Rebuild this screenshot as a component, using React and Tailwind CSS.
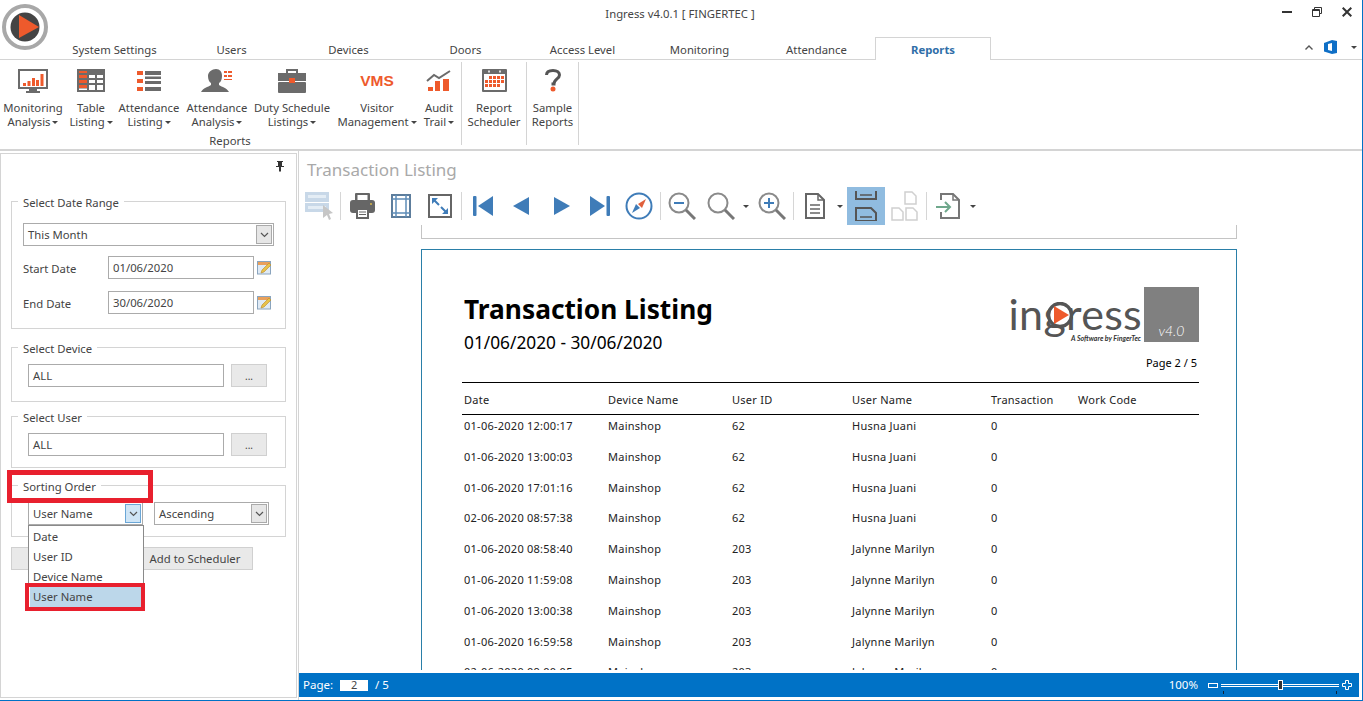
const ORANGE = '#ee5a2c';
const GRAY = '#6b6b6b';
const BLUE = '#3f7cb8';

const TABS = ['System Settings', 'Users', 'Devices', 'Doors', 'Access Level', 'Monitoring', 'Attendance', 'Reports'];

const ROWS = [
  ['01-06-2020 12:00:17', 'Mainshop', '62', 'Husna Juani', '0'],
  ['01-06-2020 13:00:03', 'Mainshop', '62', 'Husna Juani', '0'],
  ['01-06-2020 17:01:16', 'Mainshop', '62', 'Husna Juani', '0'],
  ['02-06-2020 08:57:38', 'Mainshop', '62', 'Husna Juani', '0'],
  ['01-06-2020 08:58:40', 'Mainshop', '203', 'Jalynne Marilyn', '0'],
  ['01-06-2020 11:59:08', 'Mainshop', '203', 'Jalynne Marilyn', '0'],
  ['01-06-2020 13:00:38', 'Mainshop', '203', 'Jalynne Marilyn', '0'],
  ['01-06-2020 16:59:58', 'Mainshop', '203', 'Jalynne Marilyn', '0'],
  ['02-06-2020 09:00:05', 'Mainshop', '203', 'Jalynne Marilyn', '0'],
];

function Caret({ className = '' }) {
  return <span className={`inline-block w-0 h-0 border-x-[3px] border-t-[3px] border-x-transparent border-t-[#444] align-middle ${className}`} />;
}

function AppLogo() {
  return (
    <svg width="50" height="50" viewBox="0 0 50 50" className="absolute left-0 top-[2px]">
      <circle cx="25" cy="25" r="21" fill="none" stroke="#a8a8a8" strokeWidth="4" />
      <circle cx="25" cy="25" r="14.5" fill="#444" />
      <path d="M19 13 L39 25 L19 36 Z" fill={ORANGE} />
    </svg>
  );
}

/* ribbon icons */
const MonitorIcon = () => (
  <svg width="30" height="24" viewBox="0 0 30 24">
    <rect x="0" y="0" width="30" height="20" fill={GRAY} />
    <rect x="2" y="2" width="26" height="16" fill="#fff" />
    <path d="M5 14h3v3H5zM9.500 12h3v5h-3zM14 9h3v8h-3zM18 11h3v6h-3zM22.500 5h3v12h-3z" fill={ORANGE} />
    <path d="M11 20h8v2h3v2H8v-2h3z" fill={GRAY} />
  </svg>
);
const GridIcon = () => (
  <svg width="28" height="23" viewBox="0 0 28 23">
    <rect width="28" height="23" fill={GRAY} />
    <path d="M2 6h8v3H2zM2 11h8v3H2zM2 16h8v3H2z" fill={ORANGE} />
    <path d="M12 6h6v3h-6zM20 6h6v3h-6zM12 11h6v3h-6zM20 11h6v3h-6zM12 16h6v5h-6zM20 16h6v5h-6zM2 19.500h8V21H2z" fill="#fff" />
    <path d="M2 2h8v2H2z" fill={ORANGE} />
  </svg>
);
const ListIcon = () => (
  <svg width="24" height="20" viewBox="0 0 24 20">
    <path d="M0 0h6v4H0zM0 8h6v4H0zM0 16h6v4H0z" fill={ORANGE} />
    <path d="M8 0h16v4H8zM8 5.500h16v2.500H8zM8 10h16v3H8zM8 16h16v4H8z" fill={GRAY} />
  </svg>
);
const PersonIcon = () => (
  <svg width="32" height="23" viewBox="0 0 32 23">
    <path d="M15 0c4 0 6 3 6 7 0 3-1 6-3 7v2c3 2 8 3 10 7H0c2-4 7-5 10-7v-2c-2-1-3-4-3-7 0-4 4-7 8-7z" fill={GRAY} />
    <path d="M23 2h3v2h-3zM27 2h4v2h-4zM23 6h3v2h-3zM27 6h4v2h-4zM23 10h8v1h-8z" fill={ORANGE} />
  </svg>
);
const CaseIcon = () => (
  <svg width="28" height="24" viewBox="0 0 28 24">
    <path d="M9 4V1h10v3" fill="none" stroke={GRAY} strokeWidth="2" />
    <rect y="4" width="28" height="8" fill={GRAY} />
    <rect y="13" width="28" height="11" rx="1" fill={GRAY} />
    <rect x="11" y="9" width="6" height="5" fill={ORANGE} />
  </svg>
);
const AuditIcon = () => (
  <svg width="26" height="21" viewBox="0 0 26 21">
    <path d="M1 11 L8 5 L13 8 L24 1" fill="none" stroke={GRAY} strokeWidth="2" />
    <path d="M2 17h5v4H2zM9 11h5v10H9zM17 9h6v12h-6z" fill={ORANGE} />
  </svg>
);
const CalendarIcon = () => (
  <svg width="25" height="23" viewBox="0 0 25 23">
    <rect width="25" height="23" rx="1" fill={GRAY} />
    <rect x="2" y="5" width="21" height="16" fill="#fff" />
    <path d="M6 1.500h2v2H6zM17 1.500h2v2h-2z" fill="#ddd" />
    <path d="M7 7h3v3H7zM11 7h3v3h-3zM15 7h3v3h-3zM19 7h3v3h-3zM3 11h3v3H3zM7 11h3v3H7zM11 11h3v3h-3zM15 11h3v3h-3zM19 11h3v3h-3zM3 15h3v3H3zM7 15h3v3H7zM11 15h3v3h-3zM15 15h3v3h-3z" fill={ORANGE} />
  </svg>
);
const HelpIcon = () => (
  <svg width="16" height="23" viewBox="0 0 16 23">
    <path d="M1.500 6C1.500 3 4 1.500 8 1.500s6.500 2 6.500 4.500c0 4-5.500 4-5.500 9H6.500" fill="none" stroke="#555" strokeWidth="3" />
    <circle cx="8" cy="20" r="2.500" fill={ORANGE} />
  </svg>
);

function RibbonButton({ icon, lines, caret = true, width }) {
  return (
    <div className={`flex flex-col items-center shrink-0 ${width}`}>
      <div className="h-[41px] flex items-center justify-center">{icon}</div>
      <div className="text-center leading-[14px] whitespace-nowrap">
        {lines[0]}
        <br />
        {lines[1]}
        {caret && <Caret className="ml-[2px]" />}
      </div>
    </div>
  );
}

function Group({ legend, className, children }) {
  return (
    <fieldset className={`mx-[10px] w-[275px] border border-[#d4d4d4] ${className}`}>
      <legend className="ml-[6px] px-[5px] pt-[3px] leading-[13px]">{legend}</legend>
      {children}
    </fieldset>
  );
}

function Arrow({ active }) {
  return (
    <span className={`w-[16px] h-[19px] flex items-center justify-center border shrink-0 ${active ? 'border-[#6aa6d6] bg-[#cfe5f6]' : 'border-[#aaa] bg-[#e6e6e6]'}`}>
      <svg width="9" height="6" viewBox="0 0 9 6"><path d="M1 1l3.500 3.500L8 1" fill="none" stroke="#555" strokeWidth="1.200" /></svg>
    </span>
  );
}

function Combo({ value, className, active }) {
  return (
    <div className={`h-[23px] border border-[#ababab] bg-white flex items-center justify-between pl-[4px] pr-[1px] ${className}`}>
      <span className="pt-[1px]">{value}</span>
      <Arrow active={active} />
    </div>
  );
}

function TextBox({ value, className }) {
  return <div className={`h-[23px] border border-[#ababab] bg-white flex items-center pl-[4px] pt-[1px] ${className}`}>{value}</div>;
}

function PickIcon() {
  return (
    <svg width="15" height="15" viewBox="0 0 15 15" className="ml-[3px]">
      <rect x="0.500" y="1.500" width="13" height="12.500" fill="#dfeaf5" stroke="#8aa4bd" />
      <rect x="1" y="2" width="12" height="3" fill="#e9a05c" />
      <path d="M4 13l1-3 7-7 2 2-7 7z" fill="#e8c24a" stroke="#b8892a" strokeWidth="0.600" />
    </svg>
  );
}

function DotsButton() {
  return (
    <div className="w-[36px] h-[23px] ml-[7px] border border-[#d0d0d0] bg-[#e9e9e9] flex items-center justify-center text-[10px] pt-[2px]">...</div>
  );
}

function DateRow({ label, value, className }) {
  return (
    <div className={`flex items-center ${className}`}>
      <span className="w-[85px] ml-[11px] pt-[4px]">{label}</span>
      <TextBox value={value} className="w-[146px]" />
      <PickIcon />
    </div>
  );
}

function SidePanel() {
  return (
    <div className="relative w-[297px] my-[2px] border border-[#d4d4d4] text-[#444]">
      <div className="h-[39px] flex justify-end pr-[12px] pt-[7px]">
        <svg width="8" height="11" viewBox="0 0 8 11"><path d="M1 0h6v1H6v4h2v1H5v4l-1 1-1-1V6H0V5h2V1H1z" fill="#333" /></svg>
      </div>
      <Group legend="Select Date Range" className="h-[136px]">
        <Combo value="This Month" className="mx-[11px] w-[251px] mt-[14px]" />
        <DateRow label="Start Date" value="01/06/2020" className="mt-[10px]" />
        <DateRow label="End Date" value="30/06/2020" className="mt-[12px]" />
      </Group>
      <Group legend="Select Device" className="h-[63px] mt-[10px]">
        <div className="flex mt-[9px] ml-[16px]">
          <TextBox value="ALL" className="w-[196px]" />
          <DotsButton />
        </div>
      </Group>
      <Group legend="Select User" className="h-[60px] mt-[6px]">
        <div className="flex mt-[9px] ml-[16px]">
          <TextBox value="ALL" className="w-[196px]" />
          <DotsButton />
        </div>
      </Group>
      <Group legend="Sorting Order" className="h-[60px] mt-[9px]">
        <div className="flex mt-[9px] ml-[16px]">
          <Combo value="User Name" className="w-[115px]" active />
          <Combo value="Ascending" className="w-[115px] ml-[11px]" />
        </div>
      </Group>
      <div className="flex mx-[10px] mt-[10px]">
        <div className="w-[124px] h-[23px] border border-[#d0d0d0] bg-[#e9e9e9]" />
        <div className="w-[116px] h-[23px] ml-[2px] border border-[#d0d0d0] bg-[#e9e9e9] flex items-center justify-center pt-[1px]">Add to Scheduler</div>
      </div>

      {/* open sort dropdown */}
      <div className="absolute left-[27px] top-[371px] w-[116px] h-[84px] border border-[#8a8a8a] bg-white px-[1px]">
        {['Date', 'User ID', 'Device Name'].map(o => (
          <div key={o} className="h-[20px] flex items-center pl-[3px] first:mt-[1px]">{o}</div>
        ))}
        <div className="h-[20px] flex items-center pl-[3px] bg-[#bcd7ea]">User Name</div>
      </div>

      {/* red annotations */}
      <div className="absolute left-[6px] top-[316px] w-[146px] h-[33px] border-[5px] border-[#e8202e]" />
      <div className="absolute left-[24px] top-[429px] w-[120px] h-[28px] border-[4px] border-[#e8202e]" />
    </div>
  );
}

/* toolbar icons */
const Sep = ({ className }) => <span className={`w-px h-[28px] bg-[#d6d6d6] shrink-0 ${className}`} />;

const Mag = ({ className, sign }) => (
  <svg width="28" height="28" viewBox="0 0 28 28" className={`shrink-0 ${className}`}>
    <circle cx="11" cy="11" r="9.500" fill="none" stroke="#8a8a8a" strokeWidth="2" />
    <path d="M18 18l9 9" stroke="#777" strokeWidth="3" />
    {sign && <path d="M6 11h10" stroke={BLUE} strokeWidth="2" />}
    {sign === 'plus' && <path d="M11 6v10" stroke={BLUE} strokeWidth="2" />}
  </svg>
);

const PageGlyph = ({ x, y, w = 11, h = 12, stroke = '#d0d0d0' }) => (
  <path d={`M${x} ${y}h${w - 4}l4 4v${h - 4}h-${w}z`} fill="none" stroke={stroke} strokeWidth="1.500" />
);

function Toolbar() {
  return (
    <div className="h-[38px] mt-[5px] flex items-center pl-[6px] shrink-0">
      <svg width="30" height="28" viewBox="0 0 30 28" className="shrink-0">
        <path d="M0 0h24v10H0zM0 11h24v9H0z" fill="#c8d8e8" />
        <path d="M3 3h18v3H3zM3 14h18v3H3z" fill="#e4edf5" />
        <path d="M18 13l10 8-4 1 2 5-2 1-2-5-4 3z" fill="#c6c6c6" />
      </svg>
      <Sep className="ml-[5px]" />
      <svg width="25" height="26" viewBox="0 0 25 26" className="shrink-0 ml-[9px]">
        <rect x="5" y="0" width="15" height="8" rx="1" fill="#666" />
        <rect x="7.500" y="2" width="10" height="5" fill="#fff" />
        <rect x="0" y="7" width="25" height="13" rx="3" fill="#666" />
        <rect x="6" y="15" width="13" height="11" fill="#666" />
        <rect x="8" y="17" width="9" height="7" fill="#fff" />
        <path d="M9 19h7M9 21.500h7" stroke="#666" />
        <circle cx="21" cy="11" r="1" fill="#d8b84a" />
      </svg>
      <svg width="20" height="24" viewBox="0 0 20 24" className="shrink-0 ml-[16px]">
        <rect x="1" y="1" width="18" height="22" fill="none" stroke="#5d7d9c" strokeWidth="2" />
        <path d="M5 1v22M15 1v22M1 5h18M1 19h18" stroke="#5f8db8" strokeWidth="1.500" fill="none" />
      </svg>
      <svg width="24" height="24" viewBox="0 0 24 24" className="shrink-0 ml-[17px]">
        <rect x="1" y="1" width="22" height="22" fill="none" stroke="#666" strokeWidth="2" />
        <path d="M5 5l6 6M13 13l6 6" stroke={BLUE} strokeWidth="2" />
        <path d="M4 4h6L4 10zM20 20h-6l6-6z" fill={BLUE} />
      </svg>
      <Sep className="ml-[9px]" />
      <svg width="20" height="20" viewBox="0 0 20 20" className="shrink-0 ml-[11px]" fill={BLUE}>
        <rect width="3.500" height="20" rx="1" />
        <path d="M20 0v20L5 10z" />
      </svg>
      <svg width="16" height="18" viewBox="0 0 16 18" className="shrink-0 ml-[20px]" fill={BLUE}><path d="M16 0v18L0 9z" /></svg>
      <svg width="16" height="18" viewBox="0 0 16 18" className="shrink-0 ml-[25px]" fill={BLUE}><path d="M0 0v18L16 9z" /></svg>
      <svg width="20" height="20" viewBox="0 0 20 20" className="shrink-0 ml-[20px]" fill={BLUE}>
        <rect x="16.500" width="3.500" height="20" rx="1" />
        <path d="M0 0v20L15 10z" />
      </svg>
      <svg width="28" height="28" viewBox="0 0 28 28" className="shrink-0 ml-[15px]">
        <circle cx="14" cy="14" r="12.500" fill="none" stroke={BLUE} strokeWidth="2" />
        <path d="M21 7l-4 9-4-4z" fill="#e0603c" />
        <path d="M7 21l4-9 4 4z" fill={BLUE} />
      </svg>
      <Sep className="ml-[7px]" />
      <Mag className="ml-[7px]" sign="minus" />
      <Mag className="ml-[11px]" />
      <Caret className="ml-[8px]" />
      <Mag className="ml-[9px]" sign="plus" />
      <Sep className="ml-[7px]" />
      <svg width="20" height="26" viewBox="0 0 20 26" className="shrink-0 ml-[11px]">
        <path d="M1 1h12l6 6v18H1z" fill="none" stroke="#666" strokeWidth="2" />
        <path d="M13 1v6h6M5 12h10M5 16h10M5 20h10" fill="none" stroke="#666" strokeWidth="1.500" />
      </svg>
      <Caret className="ml-[12px]" />
      <span className="w-[38px] h-[38px] ml-[4px] bg-[#90bce0] flex items-center justify-center shrink-0">
        <svg width="22" height="30" viewBox="0 0 22 30">
          <path d="M1 0v8h20V0M1 30v-13h15l5 5v8z" fill="none" stroke="#555" strokeWidth="2" />
          <path d="M5 4h12M5 26h12" stroke="#555" strokeWidth="1.500" />
        </svg>
      </span>
      <svg width="27" height="30" viewBox="0 0 27 30" className="shrink-0 ml-[6px]">
        <PageGlyph x={14} y={1} />
        <PageGlyph x={1} y={17} />
        <PageGlyph x={15} y={17} />
      </svg>
      <Sep className="ml-[8px]" />
      <svg width="24" height="26" viewBox="0 0 24 26" className="shrink-0 ml-[9px]">
        <path d="M5 7V1h12l6 6v18H5v-6" fill="none" stroke="#777" strokeWidth="2" />
        <path d="M17 1v6h6" fill="none" stroke="#777" strokeWidth="1.500" />
        <path d="M0 14h13M9 9l5 5-5 5" fill="none" stroke="#6fa88c" strokeWidth="2" />
      </svg>
      <Caret className="ml-[10px]" />
    </div>
  );
}

function IngressLogo() {
  return (
    <div className="flex items-start">
      <div className="relative w-[132px] h-[55px] font-['Lato'] text-[#555]">
        <div className="absolute right-[1px] top-[4px] text-[43px] leading-[46px] tracking-[0.3px] whitespace-nowrap">ingress</div>
        <svg width="26" height="26" viewBox="0 0 26 26" className="absolute left-[36px] top-[15px]">
          <circle cx="13" cy="13" r="11.500" fill="#fff" stroke="#555" strokeWidth="3.500" />
          <path d="M7 4l15 9-15 9z" fill={ORANGE} />
        </svg>
        <div className="absolute right-[2px] bottom-0 text-[7px] leading-[8px] font-bold italic text-[#333] whitespace-nowrap">A Software by FingerTec</div>
      </div>
      <div className="w-[55px] h-[55px] bg-[#808080] ml-[1px] flex items-end justify-center text-white text-[14px] italic font-light leading-[20px] pb-[1px] font-['Lato']">v4.0</div>
    </div>
  );
}

function ReportPage() {
  return (
    <div className="w-[816px] h-[600px] mt-[10px] border border-[#2a7fa8] bg-white pl-[40px] pr-[37px] text-[#222]">
      <div className="flex justify-between pt-[37px]">
        <div className="pl-[2px]">
          <div className="text-[26.300px] font-bold leading-[44px] text-black whitespace-nowrap">Transaction Listing</div>
          <div className="text-[17.300px] leading-[24px] text-black">01/06/2020 - 30/06/2020</div>
        </div>
        <IngressLogo />
      </div>
      <div className="text-right text-[11px] leading-[14px] pr-[2px] mt-[1px] text-black">Page 2 / 5</div>
      <div className="mt-[12px] border-y border-black h-[33px] grid grid-cols-[144px_124px_120px_139px_87px_1fr] pl-[2px] items-center text-[11px] tracking-[0.25px]">
        {['Date', 'Device Name', 'User ID', 'User Name', 'Transaction', 'Work Code'].map(h => <span key={h} className="pt-[3px]">{h}</span>)}
      </div>
      {ROWS.map((r, i) => (
        <div key={i} className="h-[30.800px] grid grid-cols-[144px_124px_120px_139px_87px_1fr] pl-[2px] pt-[3px] text-[11px] tracking-[0.25px] leading-[16px]">
          {r.map((c, j) => <span key={j}>{c}</span>)}
        </div>
      ))}
    </div>
  );
}

function StatusBar() {
  return (
    <div className="h-[24px] mt-[3px] bg-[#0072c6] text-white text-[11.500px] flex items-center pl-[4px] shrink-0">
      <span>Page:</span>
      <span className="w-[28px] h-[11px] bg-white text-[#444] ml-[7px] flex items-center justify-center text-[11px]">2</span>
      <span className="ml-[7px]">/ 5</span>
      <span className="ml-auto">100%</span>
      <span className="relative w-[144px] h-[24px] ml-[10px] mr-[7px] flex items-center shrink-0">
        <span className="w-[10px] h-[5px] border border-white bg-[#0072c6]" />
        <span className="w-[118px] h-[3px] ml-[3px] border-y border-white" />
        <span className="absolute left-[70px] top-[7px] w-[5px] h-[10px] bg-[#333] border border-white" />
        <span className="absolute left-[15px] top-[18px] w-px h-[3px] bg-[#123]" />
        <span className="absolute left-[128px] top-[18px] w-px h-[3px] bg-[#123]" />
        <svg width="10" height="10" viewBox="0 0 10 10" className="ml-[3px] shrink-0"><path d="M3.500 .5h3v3h3v3h-3v3h-3v-3h-3v-3h3z" fill="#0072c6" stroke="#fff" /></svg>
      </span>
    </div>
  );
}

export default function App() {
  return (
    <div className="relative w-[1363px] h-[701px] overflow-hidden flex flex-col bg-white border-r border-b border-[#0072c6] text-[11.300px] text-[#444] font-['Noto_Sans','Open_Sans',sans-serif]">
      <AppLogo />

      {/* title bar */}
      <div className="h-[37px] shrink-0 flex items-center">
        <div className="w-[1360px] text-center pb-[8px]">Ingress v4.0.1 [ FINGERTEC ]</div>
      </div>
      <div className="absolute right-[10px] top-[7px] flex items-center gap-[20px]">
        <span className="w-[10px] h-[2px] bg-[#333]" />
        <svg width="10" height="10" viewBox="0 0 10 10"><path d="M2.500 2V.5h7v6H8M.5 2.500h7v7h-7z M.5 3.500h7" fill="none" stroke="#333" /></svg>
        <svg width="10" height="10" viewBox="0 0 10 10"><path d="M.7 .7l8.600 8.600M9.300 .7l-8.600 8.600" stroke="#333" strokeWidth="2" /></svg>
      </div>

      {/* tabs */}
      <div className="h-[23px] shrink-0 flex pl-[56px] border-b border-[#d4d4d4] relative">
        {TABS.map(t => t === 'Reports' ? (
          <div key={t} className="w-[116px] h-[23px] flex items-center justify-center bg-white border border-b-0 border-[#d4d4d4] font-bold text-[#2f6ea8] z-10 pt-[2px]">{t}</div>
        ) : (
          <div key={t} className="w-[117px] flex items-center justify-center pt-[4px]">{t}</div>
        ))}
        <div className="absolute right-[5px] top-[3px] h-[14px] flex items-center">
          <svg width="8" height="5" viewBox="0 0 8 5"><path d="M.5 4.500L4 1l3.500 3.500" fill="none" stroke="#555" strokeWidth="1.400" /></svg>
          <svg width="13" height="14" viewBox="0 0 13 14" className="ml-[11px]"><path d="M8 0l5 1v12l-5 1-8-2.500V3z" fill="#0f6fc6" /><path d="M4 4l4-1v8l-4-1z" fill="#fff" /></svg>
          <Caret className="ml-[14px]" />
        </div>
      </div>

      {/* ribbon */}
      <div className="h-[91px] shrink-0 flex border-b-2 border-[#d4d4d4]">
        <div className="w-[462px] h-[83px] flex flex-col border-r border-[#d4d4d4] shrink-0 mt-[2px]">
          <div className="flex -mt-[2px]">
            <RibbonButton width="w-[66px]" icon={<MonitorIcon />} lines={['Monitoring', 'Analysis']} />
            <RibbonButton width="w-[50px]" icon={<GridIcon />} lines={['Table', 'Listing']} />
            <RibbonButton width="w-[66px]" icon={<ListIcon />} lines={['Attendance', 'Listing']} />
            <RibbonButton width="w-[70px]" icon={<PersonIcon />} lines={['Attendance', 'Analysis']} />
            <RibbonButton width="w-[80px]" icon={<CaseIcon />} lines={['Duty Schedule', 'Listings']} />
            <RibbonButton width="w-[90px]" icon={<span className="text-[15.500px] font-bold text-[#ee5a2c] font-['Liberation_Sans']">VMS</span>} lines={['Visitor', 'Management']} />
            <RibbonButton width="w-[34px]" icon={<AuditIcon />} lines={['Audit', 'Trail']} />
          </div>
          <div className="w-[460px] text-center leading-[14px] mt-[5px]">Reports</div>
        </div>
        <div className="w-[65px] h-[83px] border-r border-[#d4d4d4] shrink-0 mt-[2px]">
          <div className="-mt-[2px]">
            <RibbonButton width="w-[64px]" icon={<CalendarIcon />} lines={['Report', 'Scheduler']} caret={false} />
          </div>
        </div>
        <div className="w-[52px] h-[83px] border-r border-[#d4d4d4] shrink-0 mt-[2px]">
          <div className="-mt-[2px]">
            <RibbonButton width="w-[51px]" icon={<HelpIcon />} lines={['Sample', 'Reports']} caret={false} />
          </div>
        </div>
      </div>

      {/* body */}
      <div className="flex-1 min-h-0 flex">
        <SidePanel />
        <div className="w-[1061px] ml-[1px] pb-[3px] border-l border-[#d4d4d4] flex flex-col min-h-0 shrink-0">
          <div className="text-[17px] leading-[24px] text-[#a9a9a9] pl-[8px] mt-[7px] shrink-0">Transaction Listing</div>
          <Toolbar />
          <div className="flex-1 min-h-0 overflow-hidden pl-[122px]">
            <div className="w-[816px] h-[14px] border border-t-0 border-[#c4c4c4]" />
            <ReportPage />
          </div>
          <StatusBar />
        </div>
      </div>
    </div>
  );
}
